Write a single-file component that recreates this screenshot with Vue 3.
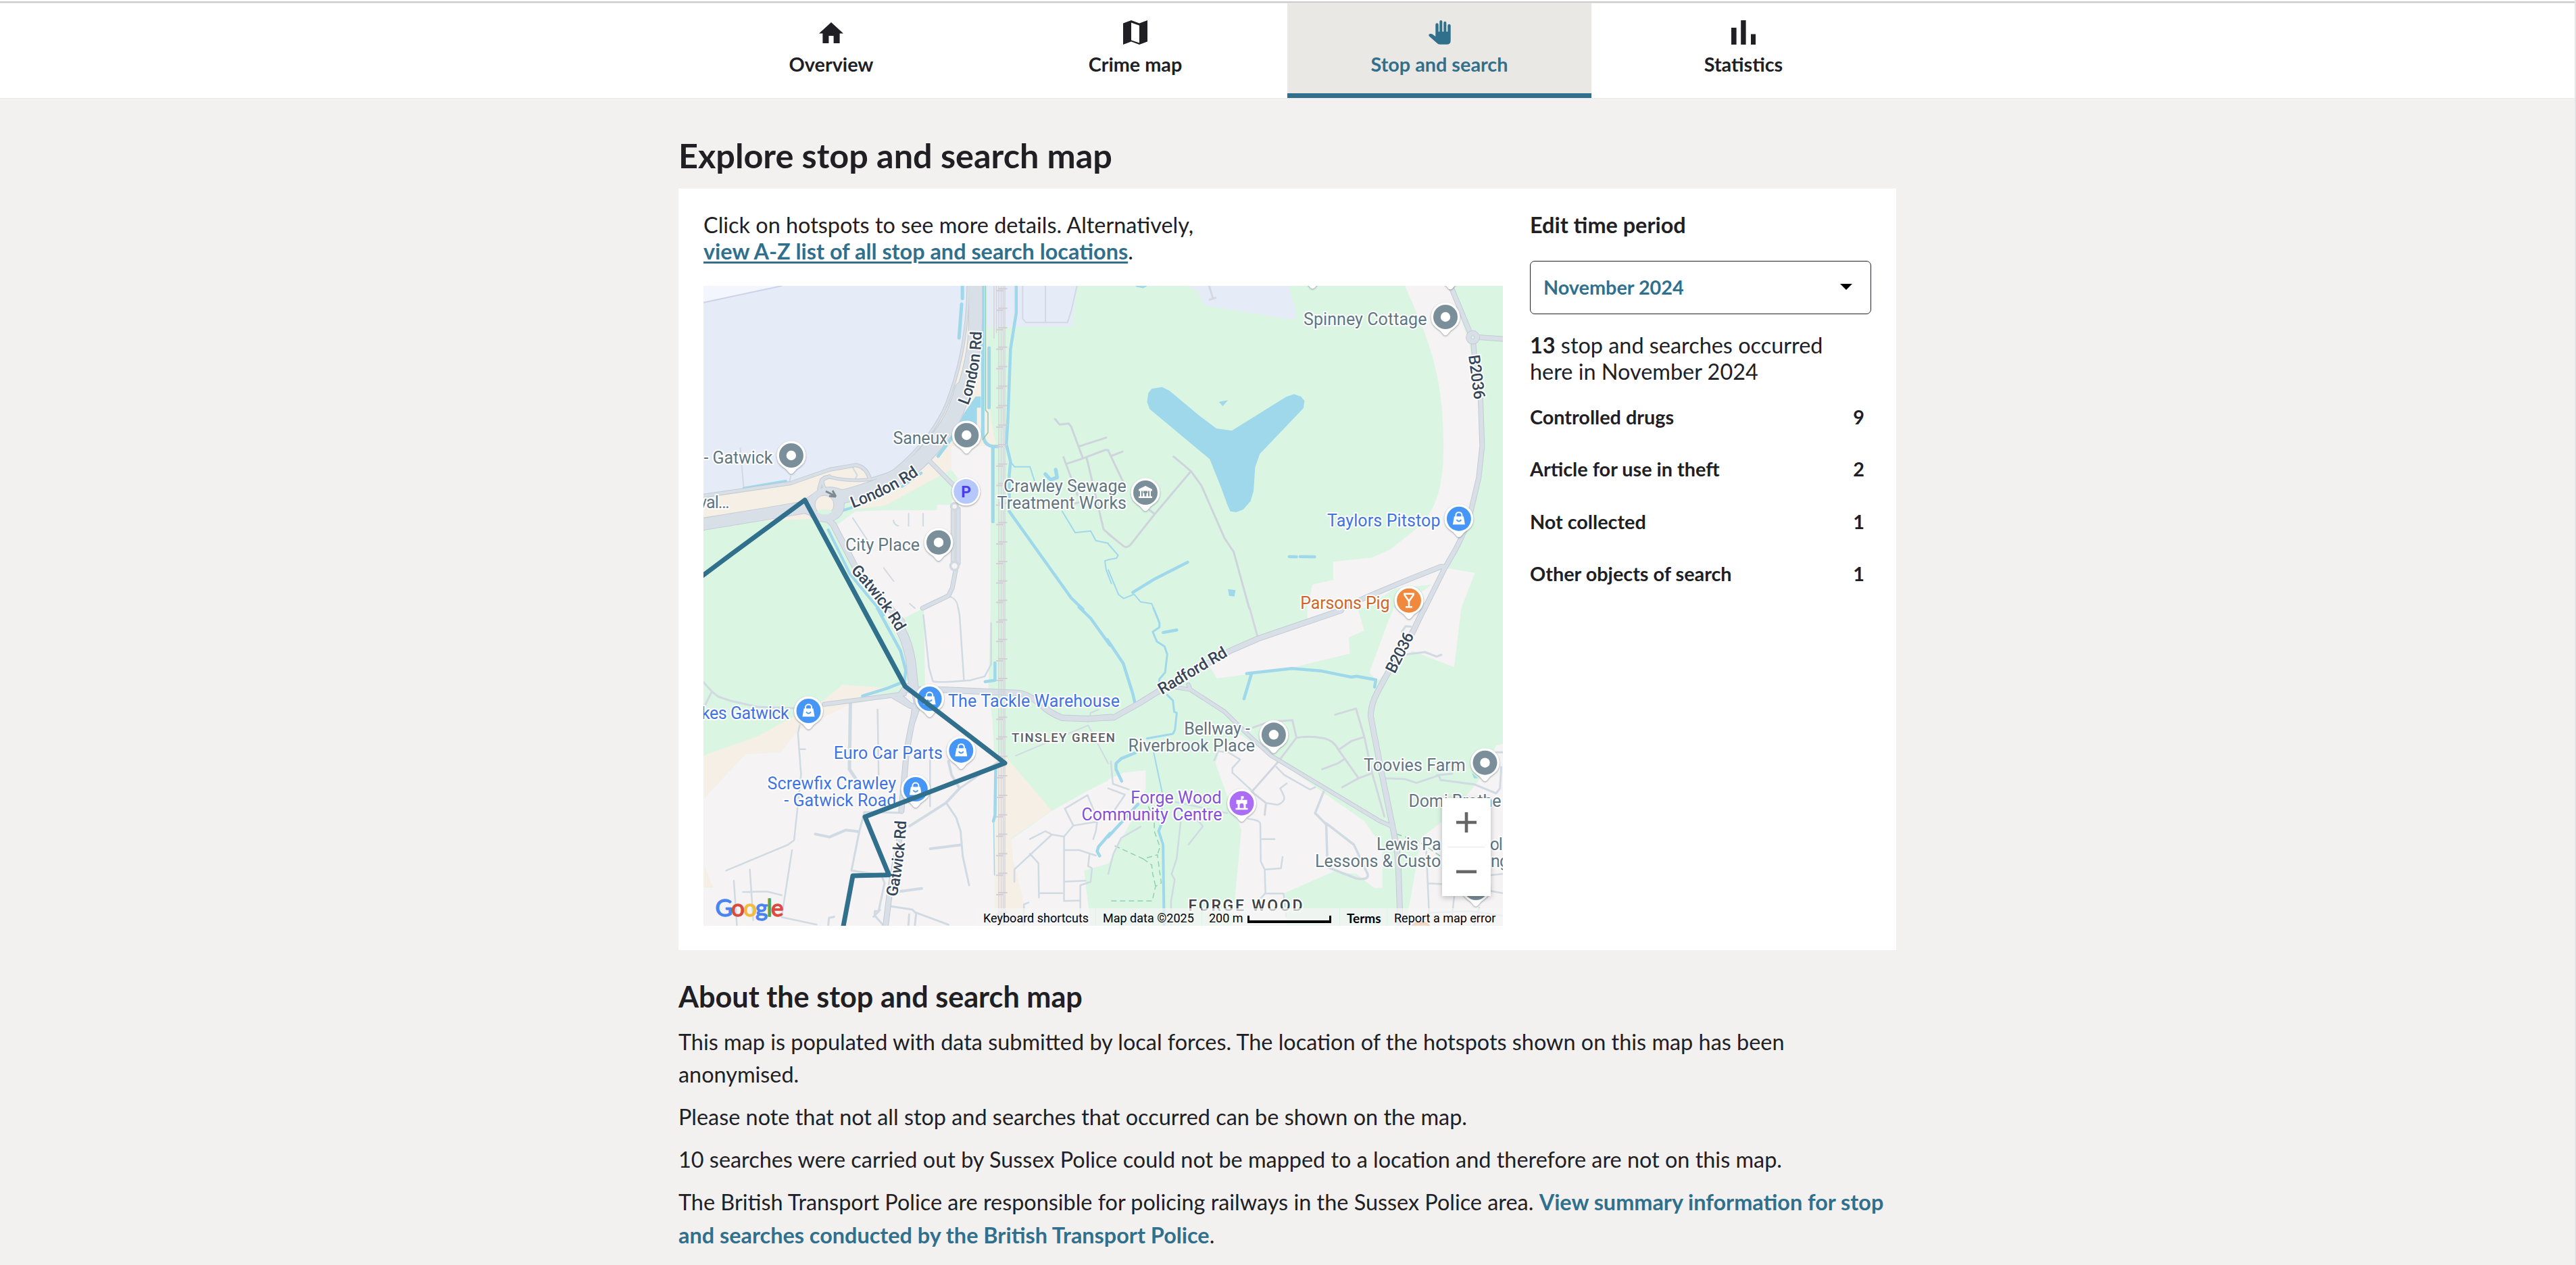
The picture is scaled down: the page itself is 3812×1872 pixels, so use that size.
<script setup>
const tabs = [
  { id: 'overview', label: 'Overview' },
  { id: 'map', label: 'Crime map' },
  { id: 'stop', label: 'Stop and search', active: true },
  { id: 'stats', label: 'Statistics' },
]

const objects = [
  { name: 'Controlled drugs', count: 9 },
  { name: 'Article for use in theft', count: 2 },
  { name: 'Not collected', count: 1 },
  { name: 'Other objects of search', count: 1 },
]

const ties = Array.from({ length: 33 }, (_, i) => 4.3 + i * 28.83)

const pins = [
  { x: 901.3, y: -23, kind: 'dot', fill: '#7b8f9b' },
  { x: 1105.3, y: -22, kind: 'dot', fill: '#7b8f9b' },
  { x: 129.9, y: 251, kind: 'dot', fill: '#7b8f9b' },
  { x: 389.3, y: 221, kind: 'dot', fill: '#7b8f9b' },
  { x: 348, y: 379.7, kind: 'dot', fill: '#7b8f9b' },
  { x: 1098, y: 46, kind: 'dot', fill: '#7b8f9b' },
  { x: 843.9, y: 664.3, kind: 'dot', fill: '#7b8f9b' },
  { x: 1156.5, y: 705.7, kind: 'dot', fill: '#7b8f9b' },
  { x: 1143, y: 891, kind: 'dot', fill: '#7b8f9b' },
  { x: 654, y: 306, kind: 'works', fill: '#7b8f9b' },
  { x: 1117.9, y: 344.7, kind: 'bag', fill: '#4596f7' },
  { x: 334.6, y: 611, kind: 'bag', fill: '#4596f7' },
  { x: 155.5, y: 629, kind: 'bag', fill: '#4596f7' },
  { x: 381.3, y: 687.7, kind: 'bag', fill: '#4596f7' },
  { x: 313.9, y: 745, kind: 'bag', fill: '#4596f7' },
  { x: 1044, y: 465.7, kind: 'bar', fill: '#f0883e' },
  { x: 796.5, y: 765.7, kind: 'hall', fill: '#ab6df5' },
  { x: 1061.3, y: 958, kind: 'bar', fill: '#f0883e' },
]

const labels = [
  { t: 'Saneux', x: 280.5, y: 233.7, w: 81, c: 'grey' },
  { t: '- Gatwick', x: 0.5, y: 262.7, w: 102, c: 'grey' },
  { t: 'val…', x: -7, y: 329.3, w: 45.5, c: 'grey' },
  { t: 'City Place', x: 210, y: 391.7, w: 110, c: 'grey' },
  { t: 'Crawley Sewage', x: 444, y: 305.3, w: 181.8, c: 'grey' },
  { t: 'Treatment Works', x: 434.6, y: 330.3, w: 191.4, c: 'grey' },
  { t: 'Spinney Cottage', x: 888, y: 57.7, w: 182.5, c: 'grey' },
  { t: 'Bellway -', x: 711.3, y: 663.7, w: 97.5, c: 'grey' },
  { t: 'Riverbrook Place', x: 628.6, y: 688.7, w: 187.5, c: 'grey' },
  { t: 'Toovies Farm', x: 977, y: 717.7, w: 150.8, c: 'grey' },
  { t: 'Domi Brothe', x: 1043.4, y: 770.7, w: 137, c: 'grey' },
  { t: 'Lewis Pa', x: 996, y: 834.7, w: 95.6, c: 'grey' },
  { t: 'ol', x: 1163.8, y: 834.7, w: 19, c: 'grey' },
  { t: 'Lessons & Custo', x: 905, y: 860, w: 186.3, c: 'grey' },
  { t: 'ng', x: 1165, y: 860, w: 27, c: 'grey' },
  { t: 'Taylors Pitstop', x: 923, y: 356.3, w: 167.5, c: 'blue' },
  { t: 'The Tackle Warehouse', x: 362, y: 623, w: 254, c: 'blue' },
  { t: 'kes Gatwick', x: -3, y: 641, w: 129.6, c: 'blue' },
  { t: 'Euro Car Parts', x: 192.8, y: 699.7, w: 161, c: 'blue' },
  { t: 'Screwfix Crawley', x: 94.4, y: 744.7, w: 190.6, c: 'blue' },
  { t: '- Gatwick Road', x: 119.3, y: 770.3, w: 166, c: 'blue' },
  { t: 'Parsons Pig', x: 883.2, y: 478, w: 132.4, c: 'orange' },
  { t: 'Forge Wood', x: 632.2, y: 765.7, w: 134.4, c: 'purple' },
  { t: 'Community Centre', x: 559.4, y: 791, w: 208, c: 'purple' },
]

const roadNames = [
  { id: 'r1', t: 'London Rd', d: 'M391.5 177C400 157 406 132 409 105Q411.5 85 411.5 64', w: 112 },
  { id: 'r2', t: 'London Rd', d: 'M221 329Q280 307 319.5 279', w: 110 },
  { id: 'r3', t: 'Gatwick Rd', d: 'M217.4 422Q260 466 288 515', w: 114 },
  { id: 'r4', t: 'Gatwick Rd', d: 'M286 904.7Q298 850 300.5 787', w: 114 },
  { id: 'r5', t: 'Radford Rd', d: 'M678.6 605.3L779 545.8', w: 114 },
  { id: 'r6', t: 'B2036', d: 'M1132 103Q1137 140 1141 171', w: 66 },
  { id: 'r7', t: 'B2036', d: 'M1023 574.7L1053.7 514', w: 64 },
]

// Road geometry per map tile, drawn once as casing and once as surface
const tileShift = {
  nw: 'translate(-1 -3) scale(.38265 .33333)',
  ne: 'translate(599 -3) scale(.38265 .33333)',
  sw: 'translate(-1 477) scale(.38265 .33333)',
  se: 'translate(599 477) scale(.38265 .33333)',
}

const roads = [
  { s: 'nw', w: 19, d: 'M1055 0V150C1055 330 1010 520 930 650C870 745 800 830 720 875C640 915 570 940 500 955' },
  { s: 'nw', w: 23, d: 'M1005 470C985 560 950 640 905 700C840 790 780 850 700 885' },
  { s: 'nw', w: 17, d: 'M430 985L250 1020L0 1067' },
  { s: 'nw', w: 11, d: 'M560 945Q470 890 430 960Q400 1040 480 1040Q540 1030 530 960' },
  { s: 'nw', w: 8, d: 'M400 960L470 905Q450 850 490 858Q570 880 650 868L730 840C850 730 930 600 960 480C1000 350 1025 200 1027 0', thin: true },
  { s: 'nw', w: 4, d: 'M0 942L340 885L490 825L590 805Q630 810 645 862M450 910L460 870L490 855' },
  { s: 'nw', w: 8, d: 'M380 1000L480 1040L505 1070L600 1280L770 1500' },
  { s: 'nw', w: 5, d: 'M880 790L970 895M968 1000V1240M988 1000V1240M978 1270L965 1350L950 1385L850 1440' },
  { s: 'ne', w: 6, d: 'M1328 20L1402 225' },
  { s: 'ne', w: 6, d: 'M1412 260Q1415 330 1425 400L1440 520L1446 720L1433 860L1400 1020Q1380 1100 1345 1175L1300 1265L1220 1450' },
  { s: 'ne', w: 6, d: 'M1430 237L1540 246M1300 1256H1285L1160 1313L990 1395L890 1450' },
  { s: 'se', w: 7, d: 'M1226 -10L1180 100L1080 290L1040 375Q1015 430 1015 480L1050 690L1105 1000Q1120 1080 1122 1150L1130 1420' },
  { s: 'se', w: 7, d: 'M900 10L580 135L470 190L190 372L120 422L22 485L-10 487' },
  { s: 'se', w: 4.5, d: 'M310 340L318 362M265 352L318 362L450 460L530 550L630 655L1050 945L1100 970' },
  { s: 'sw', w: 7.5, d: 'M1580 484L1490 491L1390 487Q1340 465 1310 430Q1270 390 1225 377L930 362H780' },
  { s: 'sw', w: 13, d: 'M745 60Q790 130 805 240L815 350' },
  { s: 'sw', w: 7, d: 'M815 340L785 350L760 390L800 430L820 440L815 480Q790 600 783 700L768 900M815 350L830 440L812 500' },
  { s: 'sw', w: 5, d: 'M780 380L570 412L470 427M730 388L800 435' },
  { s: 'sw', w: 7, d: 'M770 960L722 1270L706 1420' },
]

const lanes = [
  { s: 'nw', w: 2, d: 'M0 84L305 9', c: '#ccd2e8' },
  { s: 'nw', w: 2, d: 'M145 730L158 905M340 855L335 880M580 815L597 850L588 872M580 1040L635 1135M700 1262L738 1320M796 1020V1075M852 1020V1075M737 1050Q740 1070 757 1075M800 1420L820 1440M955 1388Q985 1400 987 1440' },
  { s: 'nw', w: 2, d: 'M1237 9V155L1250 172H1410L1425 120L1447 9M1325 9V172' },
  { s: 'nw', w: 3, c: '#ced4dc', d: 'M1362 600L1380 625L1415 620L1425 635L1470 775L1405 800M1455 722L1560 683M1470 775L1555 738H1568M1395 770L1450 940M1485 775L1550 1090L1580 1120M1440 975L1470 965' },
  { s: 'ne', w: 3, c: '#ced4dc', d: 'M0 740L10 765L55 745M10 765L60 885M253 767L320 832L180 1022L85 1160Q70 1175 60 1165L0 1110M160 1005L180 1022M320 832L360 895L450 1130L485 1190L545 1440' },
  { s: 'ne', w: 3, c: '#d5d8e0', d: 'M390 9L405 65M392 70L415 62' },
  { s: 'sw', w: 2.5, d: 'M853 30L875 265L890 325Q910 332 1035 320L1090 303L1115 250V65M988 0L993 30L1010 320' },
  { s: 'sw', w: 3, d: 'M0 325L35 370L60 393L110 412L210 438L360 445M35 370L5 440' },
  { s: 'sw', w: 5, d: 'M571 415L567 715L590 755' },
  { s: 'sw', w: 2.5, d: 'M676 450L680 740M375 520L368 555L380 740L353 1030L330 1050L90 1165M372 626H396M345 1075L305 1370M182 1160L195 1385M120 1210L132 1410M155 1260L248 1258L305 1274M305 1372L440 1405M879 670V880' },
  { s: 'sw', w: 4, d: 'M435 1003L490 1016L553 985L603 992M880 1068L1000 1051M760 1258L847 1244M950 680L962 740L993 800L940 865L800 967' },
  { s: 'sw', w: 3, d: 'M942 865L980 930L997 990L1005 1100L1030 1230M993 800L1145 680M605 992L625 905L758 908M605 992L575 1165L690 1185L703 1220L680 1345H665V1365L700 1410M660 1370L685 1340M720 1322L810 1338L825 1355L820 1410M825 1352L950 1405M485 1410L488 1375L508 1370M798 1360L795 1410' },
  { s: 'sw', w: 2, d: 'M1210 655L1490 520L1568 690M1490 505L1500 465L1530 450' },
  { s: 'sw', w: 2.5, d: 'M1265 1025L1325 990L1350 1005L1205 1160V1215M1350 1005L1397 1014L1433 965L1525 948L1520 990L1510 1025M1433 965L1400 890L1488 830L1520 920M1397 1014V1300L1455 1298M1397 1074H1455L1520 1098M1265 1090L1298 1132L1300 1285M1300 1265H1390M1397 1214L1480 1210M1495 1095L1490 1145L1505 1155L1500 1215L1460 1230V1410M1260 1307L1242 1315V1410' },
  { s: 'se', w: 3, c: '#d2d6de', d: 'M547 0L577 125M560 530L620 505L712 497L728 575L655 685L555 815L610 865L605 918M728 575Q780 565 830 577Q870 585 890 628L968 755M877 473L958 446L990 570L1020 730L1068 925M892 628L940 590L990 572M827 715L890 688L915 668M905 795L968 755L1020 733' },
  { s: 'se', w: 3, d: 'M1070 755L1145 758L1192 776L1278 742L1285 763L1415 782L1500 822L1515 800L1520 705M1270 742L1330 735M1500 640H1526M1155 205L1225 195L1270 215L1288 207M1135 105L1150 80L1170 82' },
  { s: 'se', w: 2.5, d: 'M410 675L425 635L465 640L510 672L480 710V730L560 815M610 865L655 873Q685 860 680 835L665 800L690 778M650 705L680 740L780 805L800 795M0 800L65 828L25 895M10 680L18 780L80 805' },
  { s: 'se', w: 3.5, d: 'M833 815L800 910L843 960L848 1150L960 1200Q1010 1210 1003 1180L950 1050L843 955' },
  { s: 'se', w: 2.5, d: 'M540 935Q590 940 588 960L590 1125L605 1160L608 1265L588 1290M588 1025H643M605 1160L668 1155L674 1105M608 1267H678L688 1370M260 860L460 910M280 950L265 1110L245 1180L257 1205L243 1300V1410M345 940L366 968L310 1050M125 970L50 1020L20 1090L0 1180M1230 1080L1243 1410M1238 1222L1290 1225M1480 1185L1526 1180M1475 1255L1526 1265M1245 1352L1400 1345L1526 1365M1338 1280L1325 1410M1435 1330L1415 1410' },
]

const waters = [
  { s: 'nw', w: 5, d: 'M1083 9V660Q1085 720 1125 722H1140M1122 725V1055M1107 285V550M1004 9V65M1001 90L991 240M910 765L985 650' },
  { s: 'nw', w: 4.5, d: 'M1212 9V130L1190 290L1180 600L1174 712L1190 790L1185 850V1010L1425 1395L1470 1445' },
  { s: 'nw', w: 5.5, d: 'M160 910L320 878M1325 845L1345 870L1370 860L1365 825' },
  { s: 'nw', w: 4, d: 'M485 1092L570 1290L700 1470M545 1005L600 985M770 900L845 840' },
  { s: 'nw', w: 2, d: 'M1190 790L1205 812H1265L1290 900M1390 1010L1440 1105L1500 1097L1520 1140L1568 1152M1568 1225L1555 1230L1560 1270L1580 1330' },
  { s: 'ne', w: 2, d: 'M0 1155L38 1205L32 1218L0 1225M0 1270L40 1380L60 1397L100 1378L125 1412L168 1420L175 1440' },
  { s: 'ne', w: 4.5, d: 'M95 1370L180 1310L307 1236M700 1211L728 1212M742 1211L798 1212' },
  { s: 'ne', w: 3, d: 'M110 9L135 15L145 9' },
  { s: 'sw', w: 4.5, d: 'M675 0L765 190L785 275L780 325L715 355L618 390M1130 243V320L1092 326M1133 700L1130 920L1124 945' },
  { s: 'sw', w: 1.5, d: 'M1125 940L1128 1185' },
  { s: 'sw', w: 4.5, d: 'M1455 -5L1500 45L1575 165M1575 1000L1530 1060L1525 1080L1535 1100' },
  { s: 'se', w: 4.5, d: 'M-3 140L58 245L95 380L103 420M213 108L265 97M535 290L710 268L820 278L940 306L960 302L1035 318L1030 350M553 295L525 402M105 642L50 668L30 690V715L52 768M0 1015L60 940L115 870' },
  { s: 'se', w: 3, d: 'M175 0L198 65V85L172 105L188 148L218 170L228 205L220 285L198 315L195 380M228 385L250 410L255 460L265 465L258 540L250 558L150 578' },
  { s: 'se', w: 2, d: 'M170 610L208 815V950' },
  { s: 'se', w: 4, d: 'M205 960L195 990L212 1050L216 1410' },
]
</script>

<template>
  <div class="page">
    <nav class="nav">
      <div class="tabs">
        <a v-for="tab in tabs" :key="tab.id" class="tab" :class="{ active: tab.active }">
          <span class="icon">
            <svg v-if="tab.id === 'overview'" class="home" width="36" height="31" viewBox="2 3 20 17" preserveAspectRatio="none"><path d="M10 20v-6h4v6h5v-8h3L12 3 2 12h3v8z" /></svg>
            <svg v-else-if="tab.id === 'map'" width="36" height="36" viewBox="0 0 36 36"><path fill-rule="evenodd" d="M0 4.4L12 0l12 4.4L36 0v31.4L24 36l-12-4.4L0 36zM12 3.5v26L24 33.4V7.8z" /></svg>
            <svg v-else-if="tab.id === 'stop'" width="33" height="36" viewBox="0 0 33 36"><path d="M10.3 24V6.5a2.2 2.2 0 0 1 4.4 0V16.7h1.6V2a2 2 0 0 1 4 0V16.7h2V3.8a2 2 0 0 1 4 0V16.7h2V7.9a2.2 2.2 0 0 1 4.4 0V30q0 5.8-5.7 5.8H17q-3 0-4.6-2L.8 23.6Q-.6 21 2.2 20 4.5 19.6 6 20.7z" /></svg>
            <svg v-else width="36" height="36" viewBox="0 0 36 36"><path d="M0 11h7.6v25H0zM14.2 0h7.4v36h-7.4zM29 20.5h7.4V36H29z" /></svg>
          </span>
          <span class="tab-label">{{ tab.label }}</span>
        </a>
      </div>
    </nav>

    <main class="main">
      <h1>Explore stop and search map</h1>
      <section class="card">
        <div class="map-col">
          <p class="hint">Click on hotspots to see more details. Alternatively,<br /><a>view A-Z list of all stop and search locations</a>.</p>
          <div class="map">
            <svg width="1183" height="947" viewBox="0 0 1183 947">
              <rect width="1183" height="947" fill="#dbf5e3" />
              <!-- land areas -->
              <g :transform="tileShift.nw">
                <path fill="#f5efe5" d="M0 940L340 885L490 820L600 800L640 860L720 838L900 620L980 430L1022 9H1098V180L1115 600L1135 720H960V830L705 985L600 1000L560 920L480 1040L0 1065z" />
                <path fill="#e6ebf8" d="M0 9H1030L1022 200L980 430L920 600L830 740L720 838L640 862L620 815L570 800L490 820L340 885L0 940z" />
                <path fill="#f4f6fe" d="M0 9H305L0 84z" />
                <path fill="#e6ebf8" d="M1098 9H1448L1430 180Q1428 190 1415 190H1098z" />
                <path fill="#f5f3f4" d="M520 1070L590 1010L715 1005H905V980H960V720H1113V1440H690L590 1290z" />
                <path fill="#dbf5e3" d="M705 985L960 825L985 860L960 980H905V1005H715z" />
                <path fill="#9fd8eb" d="M1055 500H1075V550H1060V690H960L1010 575z" />
              </g>
              <g :transform="tileShift.ne">
                <path fill="#e6ebf8" d="M303 9H697L723 110V150Q722 160 710 158L370 95L345 30z" />
                <path fill="#f5f3f4" d="M1148 9L1200 150Q1275 350 1290 550Q1303 750 1290 850Q1275 990 1210 1070L1090 1180L1020 1215L870 1234V1315L790 1335L770 1440H1365L1418 1283L1310 1262Q1400 1090 1430 860Q1450 690 1438 520L1395 260L1320 9z" />
                <path fill="#dbf5e3" d="M990 1440L1110 1352L1250 1335L1130 1440z" />
                <path fill="#9fd8eb" d="M208 458L168 466L155 485L150 524L160 556L392 778L435 900L462 985L472 1010L495 1014L522 1002L550 965L562 920L568 815L586 755L755 552L759 520L745 500L718 490L688 502L478 652L418 642L355 588L236 474zM428 524L463 517L443 543zM463 1355L492 1360L488 1388L467 1385z" />
              </g>
              <g :transform="tileShift.sw">
                <path fill="#f5efe5" d="M0 655L210 570L465 410L540 340L720 355L560 440L380 530L300 640L165 648L0 850zM0 1130L40 1235L0 1240z" />
                <path fill="#f5f3f4" d="M0 850L165 648L300 640L370 540L560 432L780 370L810 240L690 0H1113L1105 350L1120 500L1130 700V1410H0V1240H40L0 1130z" />
                <path fill="#dbf5e3" d="M750 60L855 0L860 350H832z" />
                <path fill="#f5efe5" d="M1130 640L1165 650L1350 900L1195 1020L1230 1240L1270 1410H1130z" />
                <path fill="#f5f3f4" d="M1568 765L1490 810L1350 900L1195 1025L1200 1120L1265 1410H1500L1475 1165L1568 1135z" />
              </g>
              <g :transform="tileShift.se">
                <path fill="#f5f3f4" d="M770 0H965L990 100L930 130L935 202L710 265L530 295L420 312L390 255L470 190L770 50z" />
                <path fill="#f5f3f4" d="M1105 0H1365L1338 262L1175 190L1080 280L1040 325L1010 285L1085 50z" />
                <path fill="#f5f3f4" d="M430 630L510 560L640 665L990 945L1060 1060V1243H1030L960 1180L870 1170L680 1265L690 1410H480L515 985L465 850L415 690z" />
                <path fill="#f5f3f4" d="M0 760L60 730L145 720V800L100 920L0 1135z" />
                <path fill="#f5f3f4" d="M1526 603L1500 610L1430 770L1320 920L1210 1020L1150 1410H1526z" />
                <path fill="#9fd8eb" d="M1405 730L1430 755H1415z" />
                <path fill="none" stroke="#8fd0b5" stroke-width="1.5" stroke-dasharray="8 5" vector-effect="non-scaling-stroke" d="M25 1055L135 1113L190 1095L205 1220L183 1235L170 1300H0M155 880L178 940V990L200 1060L190 1095M135 1113L168 1140L172 1180L183 1235M1115 1003L1200 1035L1290 1105" />
              </g>

              <g fill="none" stroke-linecap="round" stroke-linejoin="round">
                <g v-for="(p, i) in lanes" :key="'l' + i" :transform="tileShift[p.s]">
                  <path :d="p.d" :stroke="p.c || '#d0dae3'" :stroke-width="p.w" vector-effect="non-scaling-stroke" />
                </g>
                <g v-for="(p, i) in waters" :key="'w' + i" :transform="tileShift[p.s]">
                  <path :d="p.d" stroke="#9fd8eb" :stroke-width="p.w" vector-effect="non-scaling-stroke" />
                </g>
                <g v-for="(p, i) in roads" :key="'c' + i" :transform="tileShift[p.s]">
                  <path :d="p.d" stroke="#c3cbd5" :stroke-width="p.thin ? 5 : p.w + 2" vector-effect="non-scaling-stroke" />
                </g>
                <g v-for="(p, i) in roads" :key="'s' + i" :transform="tileShift[p.s]">
                  <path :d="p.d" stroke="#d8dfe6" :stroke-width="p.thin ? 3 : p.w" vector-effect="non-scaling-stroke" />
                </g>
              </g>
              <!-- roundabouts -->
              <circle cx="179" cy="324" r="19" fill="none" stroke="#d8dfe6" stroke-width="9" />
              <circle cx="179" cy="324" r="14" fill="#f5efe5" stroke="#c3cbd5" />
              <path d="M168 335Q179 342 190 335L188 331H171z" fill="#dbf5e3" />
              <path d="M181 304L193 310M196 312L186 311M196 312L191 303" stroke="#7b8a93" stroke-width="3" />
              <circle cx="371.500" cy="414.500" r="6" fill="#f5f3f4" stroke="#d0d8e0" stroke-width="3.500" />
              <circle cx="371.500" cy="326.500" r="5" fill="#f5f3f4" stroke="#d0d8e0" stroke-width="3.500" />
              <circle cx="1138.500" cy="76.300" r="6" fill="#dbf5e3" stroke="#c3cbd5" stroke-width="9" />
              <circle cx="1138.500" cy="76.300" r="6" fill="#dbf5e3" stroke="#d8dfe6" stroke-width="7" />
              <circle cx="1138.500" cy="76.300" r="2.500" fill="#dbf5e3" stroke="#c3cbd5" />
              <path d="M417.500 0V184L421 188V217L413 228" fill="none" stroke="#8dc9ae" stroke-width="1.500" />
              <!-- railway -->
              <path d="M437 0V947M440.500 0V947M443.500 0V947M446 0V947" stroke="#d0d2d7" stroke-width="1.300" />
              <path d="M430 0V78M433.500 0V70" stroke="#d5d3da" stroke-width="1.500" />
              <path v-for="y in ties" :key="y" :d="`M436 ${y}H449.500M433 ${y + 3}H444`" stroke="#d3ced5" stroke-width="2" />

              <g class="place">
                <text v-for="l in labels" :key="l.t" :x="l.x" :y="l.y" :textLength="l.w" :class="l.c">{{ l.t }}</text>
              </g>
              <text class="area small" x="456" y="675.300" textLength="153">TINSLEY GREEN</text>
              <text class="area" x="717.400" y="924.700" textLength="169">FORGE WOOD</text>
              <g v-for="r in roadNames" :key="r.id">
                <path :id="r.id" :d="r.d" fill="none" />
                <text class="road"><textPath :href="'#' + r.id" :textLength="r.w">{{ r.t }}</textPath></text>
              </g>

              <g v-for="(p, i) in pins" :key="'p' + i" :transform="`translate(${p.x} ${p.y})`">
                <path class="pin" d="M0 27.500C-2 27.500-4 25-6 22.500C-9 18.500-14 17-18.500 11A21.500 21.500 0 1 1 18.500 11C14 17 9 18.500 6 22.500C4 25 2 27.500 0 27.500z" />
                <circle r="18" :fill="p.fill" />
                <circle v-if="p.kind === 'dot'" r="7.200" fill="#fff" />
                <g v-else-if="p.kind === 'bag'">
                  <path d="M-7-3.500H7L9 8.500H-9z" fill="#fff" />
                  <path d="M-4.500-3V-5.500a4.500 4 0 0 1 9 0V-3" fill="none" stroke="#fff" stroke-width="2" />
                  <path d="M-3.500 1.500Q0 6 3.500 1.500" fill="none" :stroke="p.fill" stroke-width="2" />
                </g>
                <path v-else-if="p.kind === 'bar'" d="M-8-10H8M-7-9L0 1L7-9M0 0V9M-5 9.500H5" fill="none" stroke="#fff" stroke-width="2.600" />
                <path v-else-if="p.kind === 'hall'" fill="#fff" fill-rule="evenodd" d="M-1-10.500H3V-7H1V-5H8V1H6V7H9V9.500H-9V7H-6V1H-8V-5H-1zM-3 7H3V3A3 3 0 0 0-3 3z" />
                <path v-else fill="#fff" fill-rule="evenodd" d="M0-10L10-5V-2.500H-10V-5zM-10 5.500H10V8H-10zM-8-2.500H-6V5.500H-8zM-3-2.500V1H-1.500V5.500H-4V-2.500zM3-2.500V1H1.500V5.500H4V-2.500zM6-2.500H8V5.500H6z" />
              </g>
              <circle cx="388.600" cy="304.300" r="21" class="pin" />
              <circle cx="388.600" cy="304.300" r="18.300" fill="#b5c7fb" />
              <text class="parking" x="388.600" y="312.500" text-anchor="middle">P</text>

              <path d="M-4 431L40 398L150 317L236 477L298.600 593L446 706.300L239 785.700L274.500 871.700L221 873L206.500 950" fill="none" stroke="#30708d" stroke-width="7" stroke-linejoin="round" />

              <text class="logo" x="17.500" y="933" textLength="101"><tspan fill="#4a84f0" stroke="#4a84f0">G</tspan><tspan fill="#d94b3d" stroke="#d94b3d">o</tspan><tspan fill="#f2bc3a" stroke="#f2bc3a">o</tspan><tspan fill="#4a84f0" stroke="#4a84f0">g</tspan><tspan fill="#4fa753" stroke="#4fa753">l</tspan><tspan fill="#d94b3d" stroke="#d94b3d">e</tspan></text>
            </svg>
            <div class="zoom">
              <span class="sign"><svg width="30" height="30" viewBox="0 0 30 30"><path d="M0 15H30M15 0V30" stroke="#666" stroke-width="4.600" /></svg></span>
              <span class="rule"></span>
              <span class="sign"><svg width="30" height="30" viewBox="0 0 30 30"><path d="M0 15H30" stroke="#666" stroke-width="4.600" /></svg></span>
            </div>
            <div class="credits">
              <span class="kb">Keyboard shortcuts</span>
              <span class="data">Map data ©2025</span>
              <span class="scale">200 m<i></i></span>
              <span class="terms">Terms</span>
              <span class="report">Report a map error</span>
            </div>
          </div>
        </div>

        <aside class="side">
          <h3>Edit time period</h3>
          <div class="select">
            <span>November 2024</span>
            <svg width="18" height="9" viewBox="0 0 18 9"><path d="M0 0H18L9 9z" /></svg>
          </div>
          <p class="total"><b>13</b> stop and searches occurred<br />here in November 2024</p>
          <ul>
            <li v-for="o in objects" :key="o.name"><span>{{ o.name }}</span><span>{{ o.count }}</span></li>
          </ul>
        </aside>
      </section>

      <section class="about">
        <h2>About the stop and search map</h2>
        <p>This map is populated with data submitted by local forces. The location of the hotspots shown on this map has been<br />anonymised.</p>
        <p>Please note that not all stop and searches that occurred can be shown on the map.</p>
        <p>10 searches were carried out by Sussex Police could not be mapped to a location and therefore are not on this map.</p>
        <p>The British Transport Police are responsible for policing railways in the Sussex Police area. <a>View summary information for stop<br />and searches conducted by the British Transport Police</a>.</p>
      </section>
    </main>
  </div>
</template>

<style>
body {
  background: #f3f1f0;
}
</style>

<style scoped>
.page {
  box-sizing: border-box;
  height: 1872px;
  overflow: hidden;
  border-right: 2px solid #e5e5e5;
  background: #f3f1f0;
  color: #202024;
  font-family: Lato, sans-serif;
}
h1, h2, h3, p, ul {
  margin: 0;
  padding: 0;
}
a {
  color: #30708d;
  font-weight: 700;
}
.nav {
  box-sizing: border-box;
  height: 146px;
  background: linear-gradient(#fff 2px, #ccc 2px, #ccc 4px, #e9e8e4 4px, #e9e8e4 5px, #fff 5px);
  border-bottom: 1px solid #e9e8e4;
}
.tabs {
  display: flex;
  box-sizing: border-box;
  width: 1800px;
  height: 145px;
  margin: 0 auto;
  padding-top: 4px;
}
.tab {
  display: flex;
  flex-direction: column;
  align-items: center;
  box-sizing: border-box;
  width: 450px;
  padding-top: 26px;
  color: #202024;
  fill: #202024;
  font-size: 28.8px;
}
.tab.active {
  background: #e9e8e4;
  border-bottom: 7px solid #30708d;
  color: #30708d;
  fill: #30708d;
}
.icon {
  display: flex;
  align-items: center;
  height: 36px;
}
.icon svg {
  display: block;
}
.tab-label {
  margin-top: 12px;
  line-height: 34px;
}
.main {
  width: 1802px;
  margin: 0 auto;
  padding-top: 54px;
}
h1 {
  margin-bottom: 19px;
  font-size: 50.4px;
  line-height: 60px;
}
.card {
  display: flex;
  gap: 40px;
  padding: 35px 37px 36px;
  background: #fff;
}
.map-col {
  width: 1183px;
}
.hint {
  height: 77px;
  margin-bottom: 32px;
  font-size: 32.4px;
  line-height: 38.88px;
  white-space: nowrap;
}
.hint a {
  text-decoration: underline;
  text-decoration-thickness: 3px;
  text-underline-offset: 3px;
}
.map {
  position: relative;
  height: 947px;
  overflow: hidden;
}
.map > svg {
  display: block;
}
.map text {
  font-family: Roboto, sans-serif;
  paint-order: stroke;
  stroke: #fff;
  stroke-width: 4px;
  stroke-linejoin: round;
}
.map .place text {
  font-size: 25px;
}
.grey { fill: #5f7683; }
.blue { fill: #3f73e2; }
.orange { fill: #cf6629; }
.purple { fill: #8350da; }
.map .area {
  font-size: 23px;
  font-weight: 500;
  fill: #3a4147;
}
.map .area.small {
  font-size: 18.5px;
  fill: #5a6166;
}
.map .road {
  font-size: 23.5px;
  font-weight: 500;
  fill: #36465a;
}
.map .parking {
  font-size: 23px;
  font-weight: 700;
  fill: #4a3cf0;
  stroke: none;
}
.map .logo {
  font-family: Lato, sans-serif;
  font-size: 35px;
  font-weight: 400;
  stroke-width: 1.4px;
}
.pin {
  fill: #fff;
  filter: drop-shadow(0 1px 1px rgba(60, 70, 80, .5));
}
.zoom {
  position: absolute;
  top: 758px;
  left: 1093px;
  display: flex;
  flex-direction: column;
  align-items: center;
  width: 72px;
  height: 145px;
  background: #fff;
  box-shadow: 0 2px 8px rgba(0, 0, 0, .25);
}
.sign {
  display: flex;
  align-items: center;
  height: 72px;
}
.rule {
  width: 54px;
  height: 1px;
  background: #e6e6e6;
}
.credits {
  position: absolute;
  right: 0;
  bottom: 0;
  display: flex;
  gap: 1px;
  height: 26px;
  font: 18px/29px Roboto, sans-serif;
  color: #000;
  white-space: nowrap;
}
.credits span {
  box-sizing: border-box;
  padding-left: 10px;
  background: rgba(245, 245, 245, .72);
}
.kb { width: 176px; }
.data { width: 156px; }
.scale {
  display: flex;
  justify-content: space-between;
  width: 203px;
  padding-right: 12px;
}
.scale i {
  box-sizing: border-box;
  width: 124px;
  height: 11px;
  margin-top: 11px;
  border: solid #000;
  border-width: 0 3px 4px;
}
.terms {
  width: 69px;
  font-family: Lato, sans-serif;
  font-size: 19px;
  font-weight: 700;
}
.report { width: 171px; }
.side {
  width: 505px;
}
h3 {
  font-size: 32.4px;
  line-height: 38px;
}
.select {
  display: flex;
  align-items: center;
  justify-content: space-between;
  box-sizing: border-box;
  height: 79px;
  margin-top: 34px;
  padding: 0 27px 2px 19px;
  border: 1px solid #202024;
  border-radius: 7px;
  color: #30708d;
  font-size: 28.8px;
  font-weight: 700;
}
.select svg {
  fill: #000;
}
.total {
  margin-top: 27px;
  font-size: 32.4px;
  line-height: 38.88px;
}
ul {
  margin-top: 9px;
  list-style: none;
}
li {
  display: flex;
  justify-content: space-between;
  padding-right: 10px;
  font-size: 28.8px;
  font-weight: 700;
  line-height: 77.4px;
}
.about {
  font-size: 32.4px;
  line-height: 48.6px;
  white-space: nowrap;
}
h2 {
  margin: 43px 0 17.5px;
  font-size: 43.2px;
  line-height: 51px;
}
.about p {
  margin-bottom: 14.4px;
}
</style>
